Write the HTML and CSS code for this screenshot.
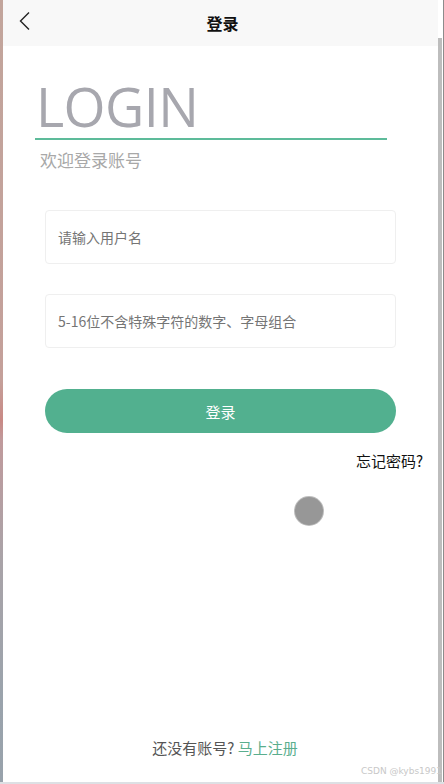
FILE: index.html
```html
<!DOCTYPE html>
<html lang="zh-CN">
<head>
<meta charset="utf-8">
<title>登录</title>
<link rel="stylesheet" href="styles.css">
</head>
<body>
<div class="frame">
  <div class="edge-left"></div>
  <div class="page">
    <header class="topbar">
      <span class="back">
        <svg width="14" height="20" viewBox="0 0 14 20"><path d="M11 1.5 L2.5 10 L11 18.5" fill="none" stroke="#222" stroke-width="1.4"/></svg>
      </span>
      <h1 class="title">登录</h1>
    </header>
    <main class="content">
      <section class="hero">
        <div class="big">LOGIN</div>
        <div class="rule"></div>
        <div class="sub">欢迎登录账号</div>
      </section>
      <form class="form">
        <div class="field"><span class="ph">请输入用户名</span></div>
        <div class="field"><span class="ph">5-16位不含特殊字符的数字、字母组合</span></div>
        <div class="btn">登录</div>
      </form>
      <div class="forgot">忘记密码?</div>
      <div class="dot-row"><span class="dot"></span></div>
      <div class="spacer"></div>
      <div class="register">还没有账号? <span class="link">马上注册</span></div>
      <div class="watermark">CSDN @kybs1991</div>
    </main>
  </div>
  <div class="scroll"><div class="thumb"></div></div>
</div>
</body>
</html>
```
FILE: styles.css
```css
html, body {
  margin: 0;
  padding: 0;
  height: 100%;
}
body {
  font-family: "Noto Sans CJK SC", "Noto Sans", sans-serif;
  background: #fff;
}
.frame {
  display: flex;
  height: 784px;
  border-bottom: 2px solid #dde0e4;
  box-sizing: border-box;
}
.edge-left {
  width: 3px;
  background: linear-gradient(to bottom, #c2a59c 0px, #c4a09a 380px, #c98985 420px, #c09a9c 440px, #a9a3a8 560px, #9aa3ac 700px, #98a2ab 784px);
}
.page {
  flex: 1;
  display: flex;
  flex-direction: column;
  min-width: 0;
}
.topbar {
  height: 46px;
  background: #f8f8f8;
  display: flex;
  align-items: center;
  justify-content: center;
  position: relative;
}
.back {
  position: absolute;
  left: 15px;
  top: 11px;
  display: flex;
}
.title {
  margin: 0;
  font-size: 16px;
  font-weight: 700;
  color: #111;
  transform: translateX(2px);
}
.content {
  flex: 1;
  display: flex;
  flex-direction: column;
}
.hero {
  padding: 32px 0 0 32px;
  width: 352px;
}
.big {
  font-family: "Open Sans", "Noto Sans", sans-serif;
  font-size: 54px;
  font-weight: 400;
  color: #a7a7ae;
  line-height: 56px;
  padding-left: 1px;
  letter-spacing: -0.6px;
}
.rule {
  height: 2px;
  background: #5dbb9a;
  margin-top: 4px;
}
.sub {
  font-size: 17px;
  color: #a8a8a8;
  margin-top: 8px;
  padding-left: 5px;
  line-height: 24px;
}
.form {
  padding: 0 42px;
  margin-top: 38px;
  display: flex;
  flex-direction: column;
}
.field {
  height: 54px;
  border: 1px solid #efefef;
  border-radius: 4px;
  box-sizing: border-box;
  display: flex;
  align-items: center;
  padding-left: 12px;
  margin-bottom: 30px;
}
.ph {
  font-size: 14px;
  color: #757575;
}
.field + .field {
  margin-bottom: 41px;
  height: 54px;
}
.btn {
  height: 44px;
  border-radius: 22px;
  background: #52b08f;
  color: #fff;
  font-size: 15px;
  display: flex;
  align-items: center;
  justify-content: center;
}
.forgot {
  align-self: flex-end;
  margin-top: 18px;
  margin-right: 15px;
  font-size: 15px;
  color: #111;
  line-height: 20px;
}
.dot-row {
  margin-top: 26px;
  padding-left: 292px;
  display: flex;
}
.dot {
  width: 28px;
  height: 28px;
  border-radius: 50%;
  background: #979797;
  box-shadow: 0 0 0 1px #bdbdbd;
}
.spacer {
  flex: 1;
}
.register {
  text-align: center;
  font-size: 15px;
  color: #555;
  line-height: 20px;
  margin-bottom: 7px;
  padding-left: 9px;
}
.link {
  color: #5aae8e;
}
.watermark {
  position: relative;
  z-index: 1;
  text-align: right;
  font-family: "DejaVu Sans", sans-serif;
  font-size: 9px;
  color: #c8c8c8;
  line-height: 12px;
  margin-bottom: 5px;
  margin-right: -4px;
}
.scroll {
  width: 5px;
  display: flex;
  flex-direction: column;
  background: #fff;
  border-right: 1px solid #8c8c8c;
}
.thumb {
  margin-top: 38px;
  flex: 1;
  background: #bdbdbd;
  width: 4px;
}
```
